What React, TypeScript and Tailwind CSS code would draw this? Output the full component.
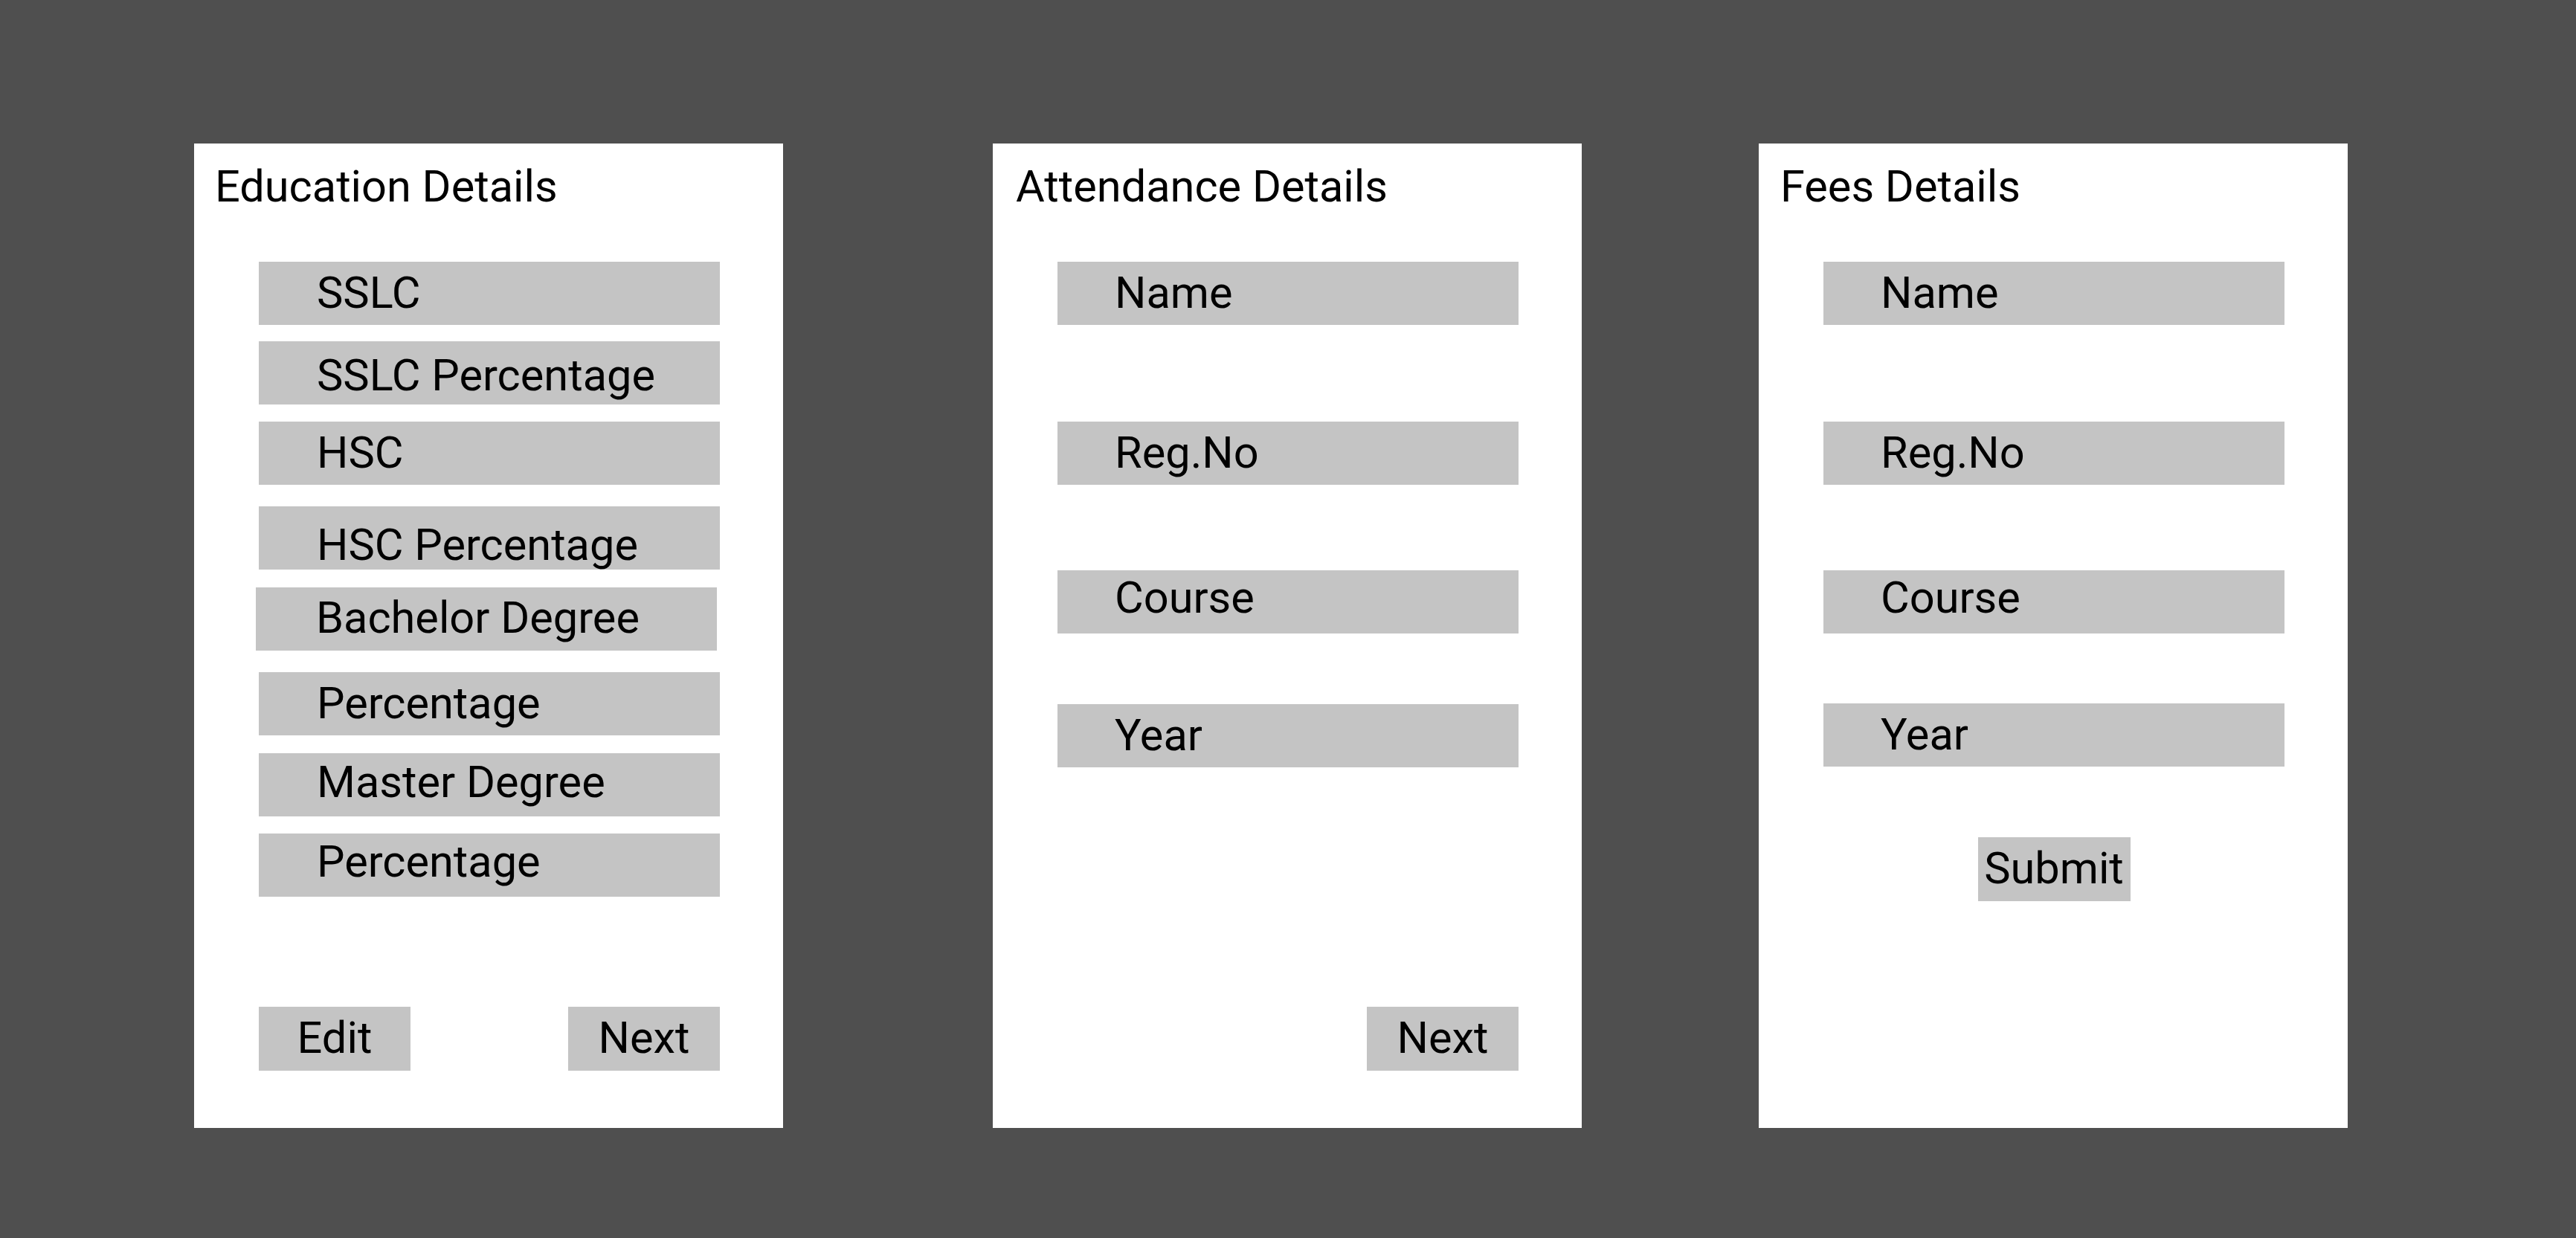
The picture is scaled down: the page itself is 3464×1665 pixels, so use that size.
const FONT = "font-['Roboto',_'Liberation_Sans',_sans-serif]";

type FieldProps = {
  label: string;
  className?: string;
};

// grey placeholder box, text sits from the top so each row can be nudged like the mockup
function Field({ label, className = "" }: FieldProps) {
  return (
    <div className={`h-[85px] w-[620px] bg-[#c4c4c4] text-[59.5px] leading-[59px] text-black ${className}`}>
      {label}
    </div>
  );
}

function Btn({ label, className = "" }: FieldProps) {
  return (
    <div className={`flex h-[86px] w-[204px] items-center justify-center bg-[#c4c4c4] text-[59.5px] leading-none text-black ${className}`}>
      {label}
    </div>
  );
}

type PanelProps = {
  title: string;
  titleClass: string;
  className?: string;
  children: React.ReactNode;
};

function Panel({ title, titleClass, className = "", children }: PanelProps) {
  return (
    <div className={`flex h-[1324px] w-[792px] shrink-0 flex-col bg-white pt-[29px] ${className}`}>
      <h2 className={`text-[59.5px] leading-[59px] text-black ${titleClass}`}>{title}</h2>
      <div className="flex flex-col pl-[87px]">{children}</div>
    </div>
  );
}

export default function App() {
  return (
    <div className={`flex h-[1665px] w-full items-start bg-[#4f4f4f] pl-[261px] pt-[193px] ${FONT}`}>
      <Panel title="Education Details" titleClass="pl-[28px]">
        <Field label="SSLC" className="mt-[71px] pl-[78px] pt-[13px]" />
        <Field label="SSLC Percentage" className="mt-[22px] pl-[78px] pt-[17px]" />
        <Field label="HSC" className="mt-[23px] pl-[78px] pt-[13px]" />
        <Field label="HSC Percentage" className="mt-[29px] pl-[78px] pt-[23px]" />
        <Field label="Bachelor Degree" className="ml-[-4px] mt-[24px] pl-[81px] pt-[12px]" />
        <Field label="Percentage" className="mt-[29px] pl-[78px] pt-[13px]" />
        <Field label="Master Degree" className="mt-[24px] pl-[78px] pt-[10px]" />
        <Field label="Percentage" className="mt-[23px] pl-[78px] pt-[9px]" />
        <div className="mt-[148px] flex w-[620px] justify-between">
          <Btn label="Edit" />
          <Btn label="Next" />
        </div>
      </Panel>

      <Panel title="Attendance Details" titleClass="pl-[31px]" className="ml-[282px]">
        <Field label="Name" className="mt-[71px] pl-[77px] pt-[13px]" />
        <Field label="Reg.No" className="mt-[130px] pl-[77px] pt-[13px]" />
        <Field label="Course" className="mt-[115px] pl-[77px] pt-[8px]" />
        <Field label="Year" className="mt-[95px] pl-[77px] pt-[13px]" />
        <div className="mt-[322px] flex w-[620px] justify-end">
          <Btn label="Next" />
        </div>
      </Panel>

      <Panel title="Fees Details" titleClass="pl-[29px]" className="ml-[238px]">
        <Field label="Name" className="mt-[71px] pl-[77px] pt-[13px]" />
        <Field label="Reg.No" className="mt-[130px] pl-[77px] pt-[13px]" />
        <Field label="Course" className="mt-[115px] pl-[77px] pt-[8px]" />
        <Field label="Year" className="mt-[94px] pl-[77px] pt-[13px]" />
        <div className="mt-[95px] flex w-[620px] justify-center">
          <Btn label="Submit" className="w-[205px]" />
        </div>
      </Panel>
    </div>
  );
}
